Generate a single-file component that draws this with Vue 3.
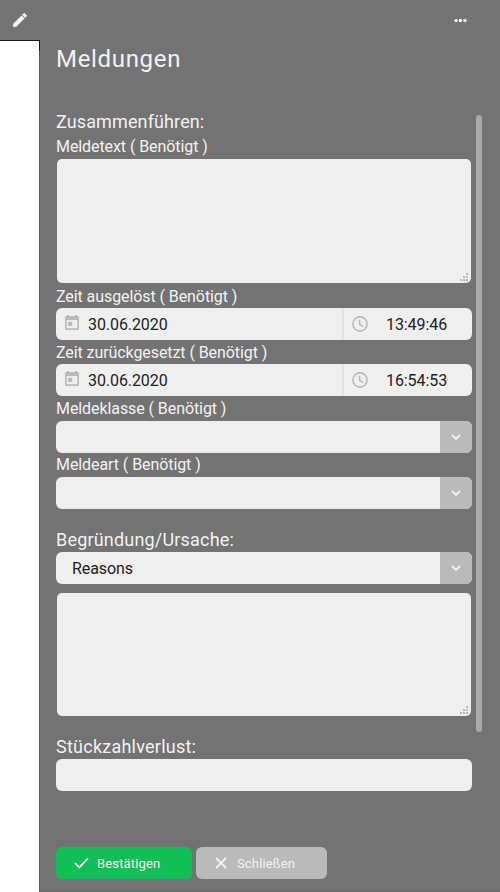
<script setup>
import { ref } from 'vue'

const messageText = ref('')
const reasonText = ref('')
const quantityLoss = ref('')
const times = [
  { label: 'Zeit ausgelöst ( Benötigt )', date: '30.06.2020', time: '13:49:46' },
  { label: 'Zeit zurückgesetzt ( Benötigt )', date: '30.06.2020', time: '16:54:53' },
]
const selects = ['Meldeklasse ( Benötigt )', 'Meldeart ( Benötigt )']
const gripDots = [[6, 0], [3, 3], [6, 3], [0, 6], [3, 6], [6, 6]]
</script>

<template>
  <div class="page">
    <aside class="rail">
      <div class="rail-head">
        <svg class="pencil" viewBox="0 0 24 24"><path d="M3 17.25V21h3.75L17.81 9.94l-3.75-3.75L3 17.25zM20.71 7.04a1 1 0 0 0 0-1.41l-2.34-2.34a1 1 0 0 0-1.41 0l-1.83 1.83 3.75 3.75 1.83-1.83z" /></svg>
      </div>
      <div class="rail-body"><span class="rail-shade"></span></div>
    </aside>
    <main class="panel">
      <header class="top">
        <svg class="more" viewBox="0 0 13 4"><circle cx="1.9" cy="1.6" r="1.65" /><circle cx="6.4" cy="1.6" r="1.65" /><circle cx="10.9" cy="1.6" r="1.65" /></svg>
      </header>
      <h1>Meldungen</h1>
      <div class="content">
        <form class="form">
          <h2 class="h-merge">Zusammenführen:</h2>
          <label>Meldetext ( Benötigt )</label>
          <div class="area">
            <textarea v-model="messageText"></textarea>
            <svg class="grip" viewBox="0 0 8 8"><rect v-for="(d, i) in gripDots" :key="i" :x="d[0]" :y="d[1]" width="2" height="2" /></svg>
          </div>
          <template v-for="t in times" :key="t.label">
            <label>{{ t.label }}</label>
            <div class="field">
              <div class="date">
                <svg class="calendar" viewBox="0 0 14 15"><path fill-rule="evenodd" d="M2 0h2v1h6V0h2v1h.8A1.2 1.2 0 0 1 14 2.2v11.6a1.2 1.2 0 0 1-1.2 1.2H1.2A1.2 1.2 0 0 1 0 13.8V2.2A1.2 1.2 0 0 1 1.2 1H2zM1.7 5v8.3h10.6V5zM3 6.7h4.2v4.2H3z" /></svg>
                <span>{{ t.date }}</span>
              </div>
              <div class="time">
                <svg class="clock" viewBox="0 0 16 16"><circle cx="8" cy="8" r="7.1" /><path d="M7.6 3.8v4.6l3.5 2" /></svg>
                <span>{{ t.time }}</span>
              </div>
            </div>
          </template>
          <template v-for="(s, i) in selects" :key="s">
            <label :class="i === 0 ? 'tall' : 'tight'">{{ s }}</label>
            <div class="field">
              <div class="value"></div>
              <button type="button" class="drop"><svg viewBox="0 0 10 7"><path d="M1 1l4 4 4-4" /></svg></button>
            </div>
          </template>
          <h2 class="section">Begründung/Ursache:</h2>
          <div class="field">
            <div class="value">Reasons</div>
            <button type="button" class="drop"><svg viewBox="0 0 10 7"><path d="M1 1l4 4 4-4" /></svg></button>
          </div>
          <div class="area reason">
            <textarea v-model="reasonText"></textarea>
            <svg class="grip" viewBox="0 0 8 8"><rect v-for="(d, i) in gripDots" :key="i" :x="d[0]" :y="d[1]" width="2" height="2" /></svg>
          </div>
          <h2 class="section loss">Stückzahlverlust:</h2>
          <input v-model="quantityLoss" class="field" type="text">
        </form>
        <div class="scrollbar"></div>
      </div>
      <footer>
        <button type="button" class="confirm">
          <svg viewBox="0 0 15 12"><path d="M1 6.2l4.3 4.2L14 1.3" /></svg><span>Bestätigen</span>
        </button>
        <button type="button" class="close">
          <svg viewBox="0 0 12 12"><path d="M1 1l10 10M11 1L1 11" /></svg><span>Schließen</span>
        </button>
      </footer>
    </main>
  </div>
</template>

<style>
body {
  margin: 0;
  background: #737373;
}
</style>

<style scoped>
* {
  box-sizing: border-box;
}
.page {
  display: flex;
  width: 500px;
  height: 892px;
  overflow: hidden;
  background: #737373;
  color: #f2f2f2;
  font: 16px/24px Roboto, sans-serif;
  letter-spacing: -0.08px;
}
.rail {
  display: flex;
  flex-direction: column;
  width: 40px;
}
.rail-head {
  height: 41px;
  padding: 10px 0 0 11px;
  border-bottom: 1px solid #1c1c1c;
}
.pencil {
  display: block;
  width: 18px;
  height: 18px;
  margin-top: 0.5px;
  fill: #f2f2f2;
  stroke: #f2f2f2;
  stroke-width: 0.6;
}
.rail-body {
  display: flex;
  justify-content: flex-end;
  flex: 1;
  background: #fff;
  border-right: 1px solid #5c5c5c;
}
.rail-shade {
  width: 1px;
  height: 10px;
  margin-right: -1px;
  background: #1c1c1c;
}
.panel {
  display: flex;
  flex-direction: column;
  width: 460px;
  padding: 0 16px;
  border-bottom: 1px solid #6b6b6b;
}
.top {
  display: flex;
  justify-content: flex-end;
  height: 42px;
  padding: 19px 17px 0 0;
}
.more {
  width: 13px;
  height: 4px;
  fill: #fff;
}
h1 {
  height: 68px;
  margin: 0;
  font-size: 24px;
  line-height: 34px;
  font-weight: 400;
  letter-spacing: 0.68px;
}
.content {
  display: flex;
  gap: 4px;
  height: 681px;
}
.form {
  width: 416px;
}
h2 {
  height: 24px;
  margin: 0;
  font-size: 18px;
  line-height: 24px;
  font-weight: 400;
  letter-spacing: 0.19px;
}
.h-merge {
  letter-spacing: 0.12px;
}
label {
  display: block;
  height: 24px;
  line-height: 26px;
}
.tall {
  height: 25px;
}
.tight {
  line-height: 24px;
}
.area {
  position: relative;
  padding: 1px;
}
textarea {
  display: block;
  width: 100%;
  height: 124px;
  padding: 8px 15px;
  border: 0;
  border-radius: 5px;
  resize: none;
  outline: 0;
  background: #efefef;
  font: inherit;
}
.reason {
  padding-top: 9px;
}
.reason textarea {
  height: 123px;
}
.grip {
  position: absolute;
  right: 4px;
  bottom: 3px;
  width: 8px;
  height: 8px;
  fill: #bababa;
}
.field {
  display: flex;
  width: 416px;
  height: 32px;
  border: 0;
  border-radius: 6px;
  overflow: hidden;
  background: #efefef;
  color: #222;
  line-height: 34px;
}
.date {
  display: flex;
  width: 286px;
  padding-left: 9px;
  gap: 9px;
}
.calendar {
  width: 14px;
  height: 15px;
  margin-top: 7px;
  fill: #bababa;
}
.time {
  display: flex;
  flex: 1;
  gap: 18px;
  padding-left: 8px;
  border-left: 2px solid #e2e2e2;
}
.clock {
  width: 16px;
  height: 16px;
  margin-top: 8px;
  fill: none;
  stroke: #bababa;
  stroke-width: 1.6;
}
.value {
  flex: 1;
  padding-left: 16px;
}
button {
  border: 0;
  font: inherit;
}
.drop {
  display: flex;
  align-items: center;
  justify-content: center;
  width: 32px;
  padding: 0;
  background: #bababa;
}
.drop svg {
  width: 10px;
  height: 7px;
  fill: none;
  stroke: #f2f2f2;
  stroke-width: 1.9;
}
.section {
  height: 25px;
  margin-top: 18px;
  line-height: 25px;
}
.loss {
  margin-top: 17px;
  letter-spacing: 0.24px;
}
.scrollbar {
  flex: none;
  width: 6px;
  height: 617px;
  margin-top: 5px;
  border-radius: 3px;
  background: #a9a9a9;
}
footer {
  display: flex;
  gap: 4px;
  margin-top: 56px;
}
footer button {
  display: flex;
  align-items: center;
  height: 32px;
  padding: 0;
  border-radius: 6px;
  color: #f2f2f2;
  font-size: 13px;
  letter-spacing: 0.15px;
}
footer span {
  padding-top: 1px;
}
footer svg {
  fill: none;
  stroke: #f2f2f2;
  stroke-width: 1.8;
}
.confirm {
  width: 136px;
  gap: 8px;
  padding-left: 18px;
  background: #11bf57;
}
.confirm svg {
  width: 15px;
  height: 12px;
}
.close {
  width: 131px;
  gap: 10.5px;
  padding-left: 18.5px;
  background: #bababa;
}
.close svg {
  width: 12px;
  height: 12px;
}
</style>
